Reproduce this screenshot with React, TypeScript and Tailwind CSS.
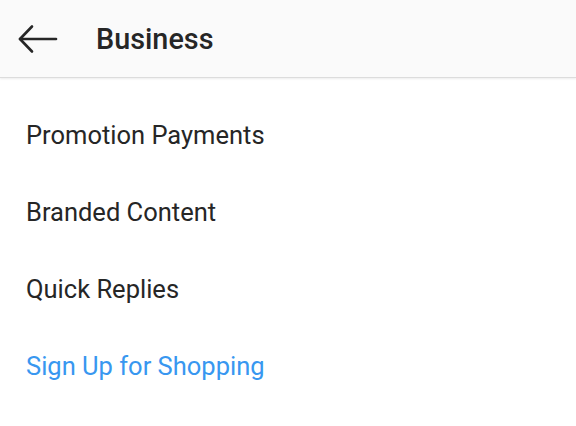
const ITEMS = [
  { name: 'Promotion Payments' },
  { name: 'Branded Content' },
  { name: 'Quick Replies' },
  { name: 'Sign Up for Shopping', link: true }
]

const BackArrow = () => (
  <svg width="40" height="30" viewBox="0 0 40 30" fill="none" stroke="#262626" strokeWidth="2.6" strokeLinecap="round" strokeLinejoin="round">
    <path d="M38 15H2" />
    <path d="M14 2.5L2 15l12 12.5" />
  </svg>
)

export default function App() {
  return (
    <div className="h-[426px] w-[576px] overflow-hidden bg-white font-['Roboto',sans-serif]">
      <header className="flex h-[78px] items-center border-b border-[#dcdcdc] bg-[#fafafa] shadow-[0_1px_2px_rgba(0,0,0,0.08)]">
        <div className="ml-[18px] flex w-[40px] items-center">
          <BackArrow />
        </div>
        <h1 className="ml-[38px] mt-[3px] text-[28.8px] font-medium text-[#262626]">Business</h1>
      </header>
      <ul className="pt-[19px]">
        {ITEMS.map(({ name, link }) => (
          <li
            key={name}
            className={`flex h-[77px] items-center pl-[26px] text-[25.5px] ${link ? 'text-[#3897f0]' : 'text-[#262626]'}`}
          >
            {name}
          </li>
        ))}
      </ul>
    </div>
  )
}
